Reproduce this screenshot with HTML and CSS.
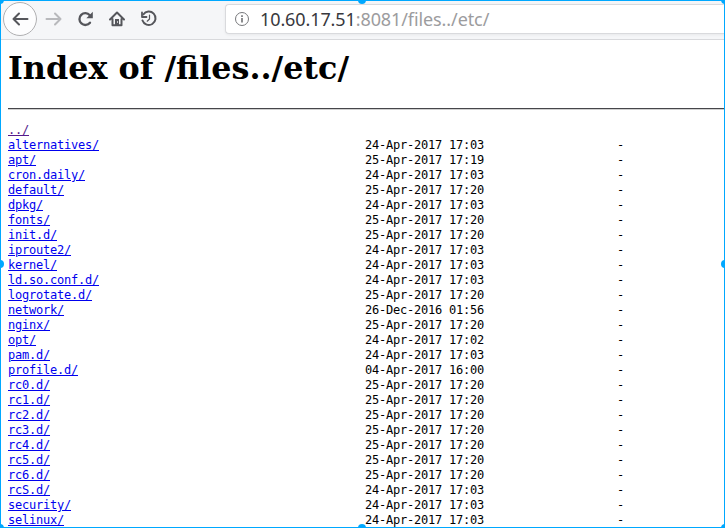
FILE: index.html
```
<!DOCTYPE html>
<html lang="en">
<head>
<meta charset="utf-8">
<title>Index of /files../etc/</title>
<link rel="stylesheet" href="styles.css">
</head>
<body>
<div class="window">
<header class="toolbar">
<svg class="nav" width="160" height="38" viewBox="0 0 160 38" fill="none" stroke="#55565b" stroke-width="2" stroke-linecap="round" stroke-linejoin="round">
<circle cx="19" cy="18" r="16.5" fill="#fdfdfe" stroke="#b0b0b2" stroke-width="1"/>
<path d="M26.500 18H12.500M18 12.500L12.500 18l5.500 5.500"/>
<path stroke="#b8b9bc" d="M45.500 18H59.500M54 12.500l5.500 5.500-5.500 5.500"/>
<path stroke-width="2.300" d="M88.800 14.200A5.900 5.900 0 1 0 89 21.700"/>
<path fill="#55565b" stroke="none" d="M91.800 10.800v6.500h-6.500z"/>
<path d="M109 18.500L116 11.500l7 7M111.500 18v6.300h9V18"/>
<path stroke="none" fill="#55565b" d="M114 18h4V25h-4z"/>
<path stroke="#c5c6c9" stroke-width="1" stroke-linecap="butt" d="M116.500 20v2"/>
<path d="M142.300 13.500A6.700 6.700 0 1 1 141.500 19.500"/>
<path d="M141 11.500v4.500h4.500" stroke-width="1.800"/>
<path stroke-width="1.200" d="M148.500 14v4l-2.300 2.200"/>
</svg>
<div class="address">
<svg width="16" height="16" viewBox="0 0 16 16" fill="none"><circle cx="8" cy="8" r="6.500" stroke="#77787b"/><path d="M8 4.300v1.700M8 7v4.500" stroke="#77787b" stroke-width="1.700"/></svg>
<span class="url"><span class="host">10.60.17.51</span>:8081/files../etc/</span>
</div>
</header>
<main>
<h1>Index of /files../etc/</h1>
<hr>
<pre><a class="visited" href="#">../</a>
<a href="#">alternatives/</a>                                      24-Apr-2017 17:03                   -
<a href="#">apt/</a>                                               25-Apr-2017 17:19                   -
<a href="#">cron.daily/</a>                                        24-Apr-2017 17:03                   -
<a href="#">default/</a>                                           25-Apr-2017 17:20                   -
<a href="#">dpkg/</a>                                              24-Apr-2017 17:03                   -
<a href="#">fonts/</a>                                             25-Apr-2017 17:20                   -
<a href="#">init.d/</a>                                            25-Apr-2017 17:20                   -
<a href="#">iproute2/</a>                                          24-Apr-2017 17:03                   -
<a href="#">kernel/</a>                                            24-Apr-2017 17:03                   -
<a href="#">ld.so.conf.d/</a>                                      24-Apr-2017 17:03                   -
<a href="#">logrotate.d/</a>                                       25-Apr-2017 17:20                   -
<a href="#">network/</a>                                           26-Dec-2016 01:56                   -
<a href="#">nginx/</a>                                             25-Apr-2017 17:20                   -
<a href="#">opt/</a>                                               24-Apr-2017 17:02                   -
<a href="#">pam.d/</a>                                             24-Apr-2017 17:03                   -
<a href="#">profile.d/</a>                                         04-Apr-2017 16:00                   -
<a href="#">rc0.d/</a>                                             25-Apr-2017 17:20                   -
<a href="#">rc1.d/</a>                                             25-Apr-2017 17:20                   -
<a href="#">rc2.d/</a>                                             25-Apr-2017 17:20                   -
<a href="#">rc3.d/</a>                                             25-Apr-2017 17:20                   -
<a href="#">rc4.d/</a>                                             25-Apr-2017 17:20                   -
<a href="#">rc5.d/</a>                                             25-Apr-2017 17:20                   -
<a href="#">rc6.d/</a>                                             25-Apr-2017 17:20                   -
<a href="#">rcS.d/</a>                                             24-Apr-2017 17:03                   -
<a href="#">security/</a>                                          24-Apr-2017 17:03                   -
<a href="#">selinux/</a>                                           24-Apr-2017 17:03                   -</pre>
</main>
<div class="frame"><i class="nw"></i><i class="n"></i><i class="ne"></i><i class="w"></i><i class="e"></i><i class="sw"></i><i class="s"></i><i class="se"></i></div>
</div>
</body>
</html>
```
FILE: styles.css
```
* { box-sizing: border-box; }
body { margin: 0; background: #fff; color: #000; }
.window { position: relative; width: 725px; height: 528px; overflow: hidden; }
.toolbar {
  display: flex;
  height: 40px;
  padding: 1px 0 0 1px;
  background: #f5f6f8;
  border-bottom: 1px solid #d8d9dc;
}
.nav { flex: none; }
.address {
  display: flex;
  align-items: center;
  flex: 1;
  height: 30px;
  margin: 3px 0 0 64px;
  padding-left: 8px;
  gap: 10px;
  background: #fff;
  border: 1px solid #d9dadd;
  border-right: 0;
  border-radius: 4px 0 0 4px;
  box-shadow: 0 1px 3px rgba(0, 0, 0, .06);
}
.url { font: 18px/28px "Noto Sans", sans-serif; letter-spacing: -.1px; color: #9c9c9e; white-space: nowrap; }
.host { color: #38383d; }
main { padding-left: 8px; }
h1 { margin: 0; padding-top: 9px; font: bold 31.8px/38px "DejaVu Serif", serif; }
hr { margin: 21px 0 0; border: 0; height: 2px; background: #46464a; border-bottom: 1px solid #cfcfcf; }
pre {
  margin: 13px 0 0;
  font: 12px/15px "DejaVu Sans Mono", monospace;
  letter-spacing: -.2246px;
}
a { color: #0000ee; text-decoration: underline; }
.visited { color: #551a8b; }
.frame { position: absolute; inset: 0; border: 1px solid #00a8ff; overflow: hidden; pointer-events: none; }
.frame i { position: absolute; width: 8px; height: 8px; border-radius: 50%; background: #00a8ff; }
.nw, .n, .ne { top: -5px; }
.sw, .s, .se { bottom: -5px; }
.nw, .w, .sw { left: -5px; }
.ne, .e, .se { right: -5px; }
.n, .s { left: 357px; }
.w, .e { top: 259px; }
```
